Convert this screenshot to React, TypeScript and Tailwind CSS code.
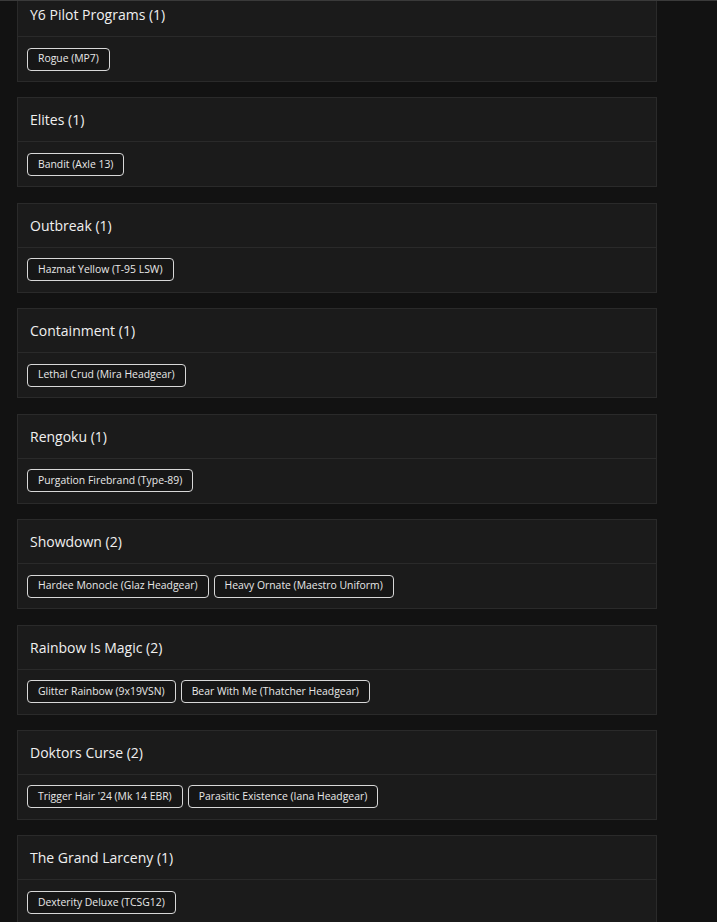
const groups: { title: string; items: string[] }[] = [
  { title: "Y6 Pilot Programs (1)", items: ["Rogue (MP7)"] },
  { title: "Elites (1)", items: ["Bandit (Axle 13)"] },
  { title: "Outbreak (1)", items: ["Hazmat Yellow (T-95 LSW)"] },
  { title: "Containment (1)", items: ["Lethal Crud (Mira Headgear)"] },
  { title: "Rengoku (1)", items: ["Purgation Firebrand (Type-89)"] },
  { title: "Showdown (2)", items: ["Hardee Monocle (Glaz Headgear)", "Heavy Ornate (Maestro Uniform)"] },
  { title: "Rainbow Is Magic (2)", items: ["Glitter Rainbow (9x19VSN)", "Bear With Me (Thatcher Headgear)"] },
  { title: "Doktors Curse (2)", items: ["Trigger Hair '24 (Mk 14 EBR)", "Parasitic Existence (Iana Headgear)"] },
  { title: "The Grand Larceny (1)", items: ["Dexterity Deluxe (TCSG12)"] },
];

export default function App() {
  return (
    <div
      className="h-[922px] overflow-hidden border-t border-[#3a3a3a] bg-[#121212] text-white"
      style={{ fontFamily: "'Open Sans', 'Liberation Sans', sans-serif" }}
    >
      <div className="h-full overflow-hidden">
        <div className="-mt-[9px] pl-[17px] w-[657px]">
          {groups.map((g) => (
            <div key={g.title} className="mb-[15.43px] border border-[#2a2a2a] bg-[#1b1b1b]">
              <div className="flex h-[44px] items-center border-b border-[#2a2a2a] px-3 text-[14px] font-medium text-[#f0f0f0]">
                {g.title}
              </div>
              <div className="flex h-[44px] items-center gap-[5px] px-[9px]">
                {g.items.map((it) => (
                  <span
                    key={it}
                    className="flex h-[23px] items-center rounded-[4px] border border-[#d8d8d8] bg-[#161616] px-[10px] text-[10.4px] text-[#e8e8e8]"
                  >
                    {it}
                  </span>
                ))}
              </div>
            </div>
          ))}
        </div>
      </div>
    </div>
  );
}
